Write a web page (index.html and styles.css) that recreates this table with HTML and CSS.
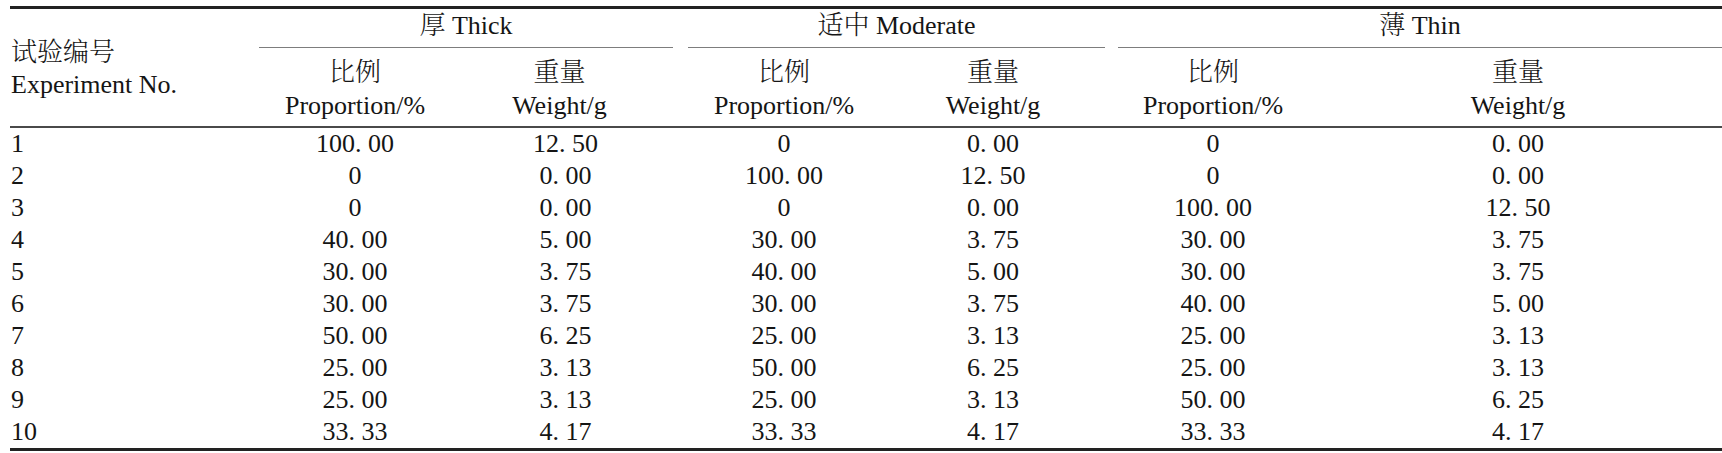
FILE: index.html
```html
<!DOCTYPE html>
<html lang="zh">
<head>
<meta charset="utf-8">
<title>Table</title>
<link rel="stylesheet" href="styles.css">
</head>
<body>
<div class="tbl">
  <div class="h-id">
    <span class="zh">试验编号</span>
    <span>Experiment No.</span>
  </div>
  <div class="grp g1"><span class="zh">厚</span> Thick</div>
  <div class="grp g2"><span class="zh">适中</span> Moderate</div>
  <div class="grp g3"><span class="zh">薄</span> Thin</div>

  <div class="sub c1"><span class="zh">比例</span><span>Proportion/%</span></div>
  <div class="sub c2"><span class="zh">重量</span><span>Weight/g</span></div>
  <div class="sub c3"><span class="zh">比例</span><span>Proportion/%</span></div>
  <div class="sub c4"><span class="zh">重量</span><span>Weight/g</span></div>
  <div class="sub c5"><span class="zh">比例</span><span>Proportion/%</span></div>
  <div class="sub c6"><span class="zh">重量</span><span>Weight/g</span></div>

  <div class="cell id">1</div><div class="cell">100. 00</div><div class="cell w1">12. 50</div><div class="cell">0</div><div class="cell w2">0. 00</div><div class="cell">0</div><div class="cell">0. 00</div>
  <div class="cell id">2</div><div class="cell">0</div><div class="cell w1">0. 00</div><div class="cell">100. 00</div><div class="cell w2">12. 50</div><div class="cell">0</div><div class="cell">0. 00</div>
  <div class="cell id">3</div><div class="cell">0</div><div class="cell w1">0. 00</div><div class="cell">0</div><div class="cell w2">0. 00</div><div class="cell">100. 00</div><div class="cell">12. 50</div>
  <div class="cell id">4</div><div class="cell">40. 00</div><div class="cell w1">5. 00</div><div class="cell">30. 00</div><div class="cell w2">3. 75</div><div class="cell">30. 00</div><div class="cell">3. 75</div>
  <div class="cell id">5</div><div class="cell">30. 00</div><div class="cell w1">3. 75</div><div class="cell">40. 00</div><div class="cell w2">5. 00</div><div class="cell">30. 00</div><div class="cell">3. 75</div>
  <div class="cell id">6</div><div class="cell">30. 00</div><div class="cell w1">3. 75</div><div class="cell">30. 00</div><div class="cell w2">3. 75</div><div class="cell">40. 00</div><div class="cell">5. 00</div>
  <div class="cell id">7</div><div class="cell">50. 00</div><div class="cell w1">6. 25</div><div class="cell">25. 00</div><div class="cell w2">3. 13</div><div class="cell">25. 00</div><div class="cell">3. 13</div>
  <div class="cell id">8</div><div class="cell">25. 00</div><div class="cell w1">3. 13</div><div class="cell">50. 00</div><div class="cell w2">6. 25</div><div class="cell">25. 00</div><div class="cell">3. 13</div>
  <div class="cell id">9</div><div class="cell">25. 00</div><div class="cell w1">3. 13</div><div class="cell">25. 00</div><div class="cell w2">3. 13</div><div class="cell">50. 00</div><div class="cell">6. 25</div>
  <div class="cell id">10</div><div class="cell">33. 33</div><div class="cell w1">4. 17</div><div class="cell">33. 33</div><div class="cell w2">4. 17</div><div class="cell">33. 33</div><div class="cell">4. 17</div>
</div>
</body>
</html>
```

FILE: styles.css
```css
html, body {
  margin: 0;
  padding: 0;
  background: #ffffff;
}

body {
  font-family: "Liberation Serif", "Noto Serif CJK SC", "Noto Sans CJK SC", serif;
  font-size: 26px;
  color: #151515;
}

.zh {
  font-weight: 300;
}

.tbl {
  margin: 6px 0 0 10px;
  width: 1712px;
  display: grid;
  grid-template-columns: 243px 204px 223px 208px 224px 202px 408px;
  grid-template-rows: 39px 80px repeat(10, 32px);
  border-top: 3px solid #222;
  border-bottom: 3px solid #222;
}

.h-id {
  grid-column: 1;
  grid-row: 1 / 3;
  display: flex;
  flex-direction: column;
  justify-content: center;
  padding-left: 1px;
  line-height: 32px;
  border-bottom: 2px solid #4a4a4a;
}

.h-id .zh {
  padding-top: 3px;
}

.grp {
  grid-row: 1;
  margin: 0 7px 0 6px;
  border-bottom: 1px solid #7d7d7d;
  text-align: center;
  line-height: 34px;
}

.g1 { grid-column: 2 / 4; }
.g2 { grid-column: 4 / 6; margin-left: 8px; }
.g3 { grid-column: 6 / 8; margin-right: 0; }

.sub {
  grid-row: 2;
  display: flex;
  flex-direction: column;
  justify-content: center;
  align-items: center;
  line-height: 33px;
  border-bottom: 2px solid #4a4a4a;
}

.sub .zh {
  padding-top: 3px;
}

.c1 { grid-column: 2; }
.c2 { grid-column: 3; padding-right: 18px; }
.c3 { grid-column: 4; }
.c4 { grid-column: 5; padding-right: 14px; }
.c5 { grid-column: 6; }
.c6 { grid-column: 7; }

.cell {
  line-height: 32px;
  text-align: center;
  white-space: pre;
}

.cell.w1 { padding-right: 6px; }
.cell.w2 { padding-right: 14px; }

.cell.id {
  text-align: left;
  padding-left: 1px;
}
```
